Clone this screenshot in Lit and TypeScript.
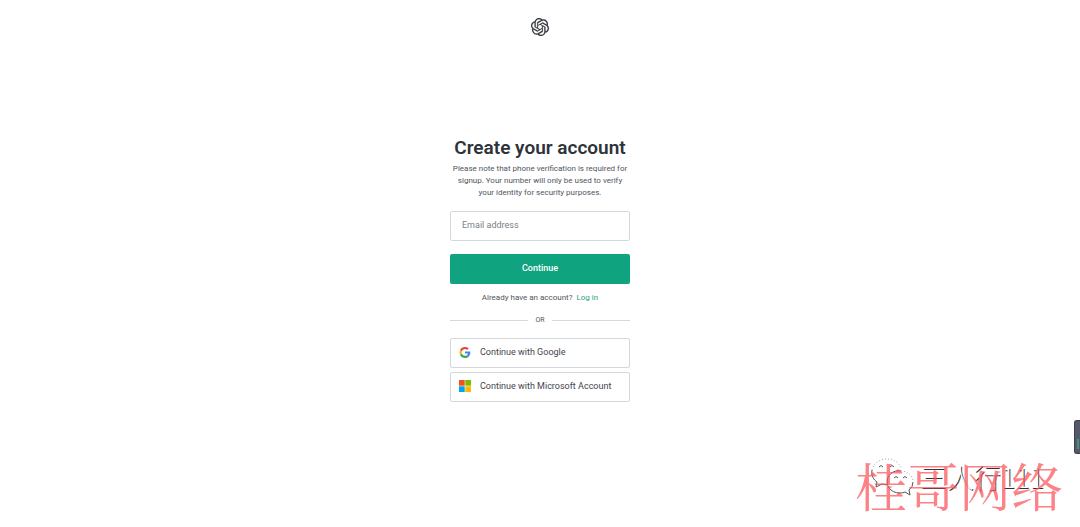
import { LitElement, html, css, svg } from "lit";
import { customElement } from "lit/decorators.js";

const openaiMark = svg`<path fill="currentColor" stroke="currentColor" stroke-width=".2" d="M22.2819 9.8211a5.9847 5.9847 0 0 0-.5157-4.9108 6.0462 6.0462 0 0 0-6.5098-2.9A6.0651 6.0651 0 0 0 4.9807 4.1818a5.9847 5.9847 0 0 0-3.9977 2.9 6.0462 6.0462 0 0 0 .7427 7.0966 5.98 5.98 0 0 0 .511 4.9107 6.051 6.051 0 0 0 6.5146 2.9001A5.9847 5.9847 0 0 0 13.2599 24a6.0557 6.0557 0 0 0 5.7718-4.2058 5.9894 5.9894 0 0 0 3.9977-2.9001 6.0557 6.0557 0 0 0-.7475-7.0729zm-9.022 12.6081a4.4755 4.4755 0 0 1-2.8764-1.0408l.1419-.0804 4.7783-2.7582a.7948.7948 0 0 0 .3927-.6813v-6.7369l2.02 1.1686a.071.071 0 0 1 .038.052v5.5826a4.504 4.504 0 0 1-4.4945 4.4944zm-9.6607-4.1254a4.4708 4.4708 0 0 1-.5346-3.0137l.142.0852 4.783 2.7582a.7712.7712 0 0 0 .7806 0l5.8428-3.3685v2.3324a.0804.0804 0 0 1-.0332.0615L9.74 19.9502a4.4992 4.4992 0 0 1-6.1408-1.6464zM2.3408 7.8956a4.485 4.485 0 0 1 2.3655-1.9728V11.6a.7664.7664 0 0 0 .3879.6765l5.8144 3.3543-2.0201 1.1685a.0757.0757 0 0 1-.071 0l-4.8303-2.7865A4.504 4.504 0 0 1 2.3408 7.872zm16.5963 3.8558L13.1038 8.364 15.1192 7.2a.0757.0757 0 0 1 .071 0l4.8303 2.7913a4.4944 4.4944 0 0 1-.6765 8.1042v-5.6772a.79.79 0 0 0-.407-.667zm2.0107-3.0231l-.142-.0852-4.7735-2.7818a.7759.7759 0 0 0-.7854 0L9.409 9.2297V6.8974a.0662.0662 0 0 1 .0284-.0615l4.8303-2.7866a4.4992 4.4992 0 0 1 6.6802 4.66zM8.3065 12.863l-2.02-1.1638a.0804.0804 0 0 1-.038-.0567V6.0742a4.4992 4.4992 0 0 1 7.3757-3.4537l-.142.0805L8.704 5.459a.7948.7948 0 0 0-.3927.6813zm1.0976-2.3654l2.602-1.4998 2.6069 1.4998v2.9994l-2.5974 1.4997-2.6067-1.4997Z"/>`;

@customElement("app-root")
export class AppRoot extends LitElement {
  static styles = css`
    :host {
      display: block;
      position: relative;
      min-height: 100vh;
      overflow: hidden;
      box-sizing: border-box;
      background: #fff;
      color: #4f5560;
      font: 8px/12px Roboto, "Liberation Sans", sans-serif;
    }
    *, *::before, *::after { box-sizing: border-box; }
    header {
      display: flex;
      justify-content: center;
      padding-top: 18px;
      color: #30343b;
    }
    .mark { width: 18px; height: 18px; display: block; }
    main {
      width: 180px;
      margin: 100px auto 0;
      text-align: center;
    }
    h1 {
      margin: 0 -10px;
      font: 600 19px/24px Roboto, sans-serif;
      color: #2d333a;
      white-space: nowrap;
    }
    .note { margin: 3px -4px 12px; }
    form { display: grid; gap: 13px; margin: 0; }
    .email, .continue, .provider {
      width: 100%;
      height: 30px;
      border-radius: 2px;
      font: 9px/12px Roboto, "Liberation Sans", sans-serif;
    }
    .email {
      border: 1px solid #d3d8dd;
      padding: 0 11px 2px;
      background: #fff;
      color: #2d333a;
      outline: none;
    }
    .email::placeholder { color: #7b8088; opacity: 1; }
    .continue {
      border: 0;
      padding: 0 0 2px;
      background: #10a37f;
      color: #fff;
      font-weight: 500;
    }
    .login { margin: 8px 0 0; }
    .login a { color: #2ba080; text-decoration: none; margin-left: 2px; }
    .or {
      display: flex;
      align-items: center;
      gap: 7px;
      margin: 10px 0 12px;
      font-size: 7px;
    }
    .or::before, .or::after {
      content: "";
      flex: 1;
      height: 1px;
      background: #d6dade;
    }
    .providers { display: grid; gap: 4px; }
    .provider {
      display: flex;
      align-items: center;
      gap: 9px;
      padding: 0 8px 2px;
      border: 1px solid #d3d8dd;
      background: #fff;
      color: #3f454d;
      text-align: left;
      white-space: nowrap;
    }
    .provider svg { width: 12px; height: 12px; flex: none; }
    .handle {
      position: absolute;
      right: 0;
      bottom: 73px;
      width: 6px;
      height: 34px;
      border: 1px solid #3d4152;
      border-right: 0;
      border-radius: 3px 0 0 3px;
      background: #555a6b;
    }
    .level {
      position: absolute;
      left: 2px;
      right: 1px;
      bottom: 4px;
      height: 10px;
      background: #508c7d;
    }
    .account {
      position: absolute;
      right: 36px;
      bottom: 30px;
      display: flex;
      align-items: center;
      gap: 6px;
      color: #fff;
      font: 300 27px/40px "Noto Sans CJK SC", sans-serif;
      text-shadow: 1px 1px 0 #333;
    }
    .wechat { width: 44px; height: 38px; }
    .stamp {
      position: absolute;
      right: 17px;
      bottom: 12px;
      color: rgba(250, 82, 88, 0.72);
      font: 400 52px/60px "Noto Serif CJK SC", "Noto Sans CJK SC", serif;
      white-space: nowrap;
    }
  `;

  render() {
    return html`
      <header>
        <svg class="mark" viewBox="0 0 24 24" role="img" aria-label="OpenAI">${openaiMark}</svg>
      </header>
      <main>
        <h1>Create your account</h1>
        <p class="note">
          Please note that phone verification is required for<br />
          signup. Your number will only be used to verify<br />
          your identity for security purposes.
        </p>
        <form @submit=${(e: Event) => e.preventDefault()}>
          <input class="email" type="email" aria-label="Email address" placeholder="Email address" />
          <button class="continue" type="submit">Continue</button>
        </form>
        <p class="login">Already have an account? <a href="#login">Log in</a></p>
        <div class="or">OR</div>
        <div class="providers">
          <button class="provider" type="button">
            <svg viewBox="-2 -4 52 52" aria-hidden="true">
              <path fill="#EA4335" d="M24 9.5c3.54 0 6.71 1.22 9.21 3.6l6.85-6.85C35.9 2.38 30.47 0 24 0 14.62 0 6.51 5.38 2.56 13.22l7.98 6.19C12.43 13.72 17.74 9.5 24 9.5z"/>
              <path fill="#4285F4" d="M46.98 24.55c0-1.57-.15-3.09-.38-4.55H24v9.02h12.94c-.58 2.96-2.26 5.48-4.78 7.18l7.73 6c4.51-4.18 7.09-10.36 7.09-17.65z"/>
              <path fill="#FBBC05" d="M10.53 28.59c-.48-1.45-.76-2.99-.76-4.59s.27-3.14.76-4.59l-7.98-6.19C.92 16.46 0 20.12 0 24c0 3.88.92 7.54 2.56 10.78l7.97-6.19z"/>
              <path fill="#34A853" d="M24 48c6.48 0 11.93-2.13 15.89-5.81l-7.73-6c-2.15 1.45-4.92 2.3-8.16 2.3-6.26 0-11.57-4.22-13.47-9.91l-7.98 6.19C6.51 42.62 14.62 48 24 48z"/>
            </svg>
            <span>Continue with Google</span>
          </button>
          <button class="provider" type="button">
            <svg viewBox="0 0 21 21" aria-hidden="true">
              <path fill="#f25022" d="M0 0h10v10H0z"/>
              <path fill="#7fba00" d="M11 0h10v10H11z"/>
              <path fill="#00a4ef" d="M0 11h10v10H0z"/>
              <path fill="#ffb900" d="M11 11h10v10H11z"/>
            </svg>
            <span>Continue with Microsoft Account</span>
          </button>
        </div>
      </main>
      <div class="handle"><div class="level"></div></div>
      <div class="account">
        <svg class="wechat" viewBox="0 0 44 38" fill="none" stroke="#555" stroke-width="1" aria-hidden="true">
          <path stroke="#aaa" stroke-dasharray="1 2" d="M2 12C4 4 11 1 17 1c7 0 13 4 14 10"/>
          <path d="M2 12c-1 6 2 10 5 12l-1 5 6-3 5 1"/>
          <path d="M9 9q2-3 4 0M20 9q2-3 4 0" />
          <path d="M18 19c3-5 8-7 13-6"/>
          <path stroke="#aaa" stroke-dasharray="1 2" d="M31 13c7 0 12 5 12 11"/>
          <path d="M18 19c-3 8 2 16 12 16q3 0 5-1l5 3-1-5q4-3 4-8"/>
          <path d="M24 20q2-3 4 0M33 20q2-3 4 0" />
        </svg>
        <span>三人行111</span>
      </div>
      <div class="stamp">桂哥网络</div>
    `;
  }
}
